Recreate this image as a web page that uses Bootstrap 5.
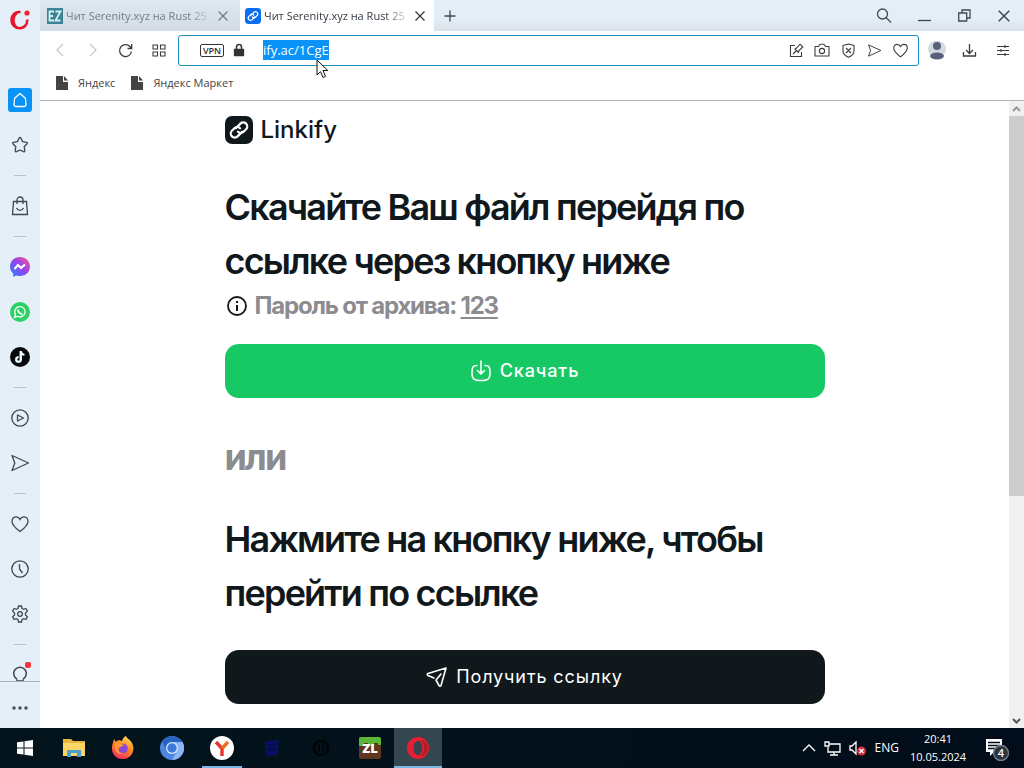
<!DOCTYPE html>
<html lang="ru">
<head>
<meta charset="utf-8">
<meta name="viewport" content="width=device-width, initial-scale=1">
<title>Linkify</title>
<link href="https://cdn.jsdelivr.net/npm/bootstrap@5.3.0/dist/css/bootstrap.min.css" rel="stylesheet">
<style>
body{font-family:"Open Sans","Noto Sans",sans-serif;font-size:12px;line-height:16px;color:#333;background:#fff}
button,input{font:inherit;color:inherit}
button{border:0;background:none;padding:0}
svg{display:block;fill:none;stroke:currentColor;stroke-width:1.3;flex:none}
.ic{width:18px;height:18px}
.side{width:40px;background:#e5eff8;color:#3f474e}
.side-logo{height:77px;padding:9px 0 0 9px}
.side-list{overflow:hidden;min-height:0}
.side-btn{height:45px;width:40px;flex:none;display:flex;align-items:center;justify-content:center}
.side-sep{height:16px;flex:none;display:flex;align-items:center;justify-content:center}
.side-sep::before{content:"";width:12px;height:1px;background:#b9c3cb}
.side-foot{height:47px;padding-top:6px;border-top:1px solid #a9b3bb}
.home-tile{width:24px;height:24px;border-radius:3px;background:#0a93f7;color:#fff;display:grid;place-items:center}
.tabs{height:31px;background:linear-gradient(#e4eef7 60%,#d8e1e9)}
.btab{width:200px;padding:0 11px 0 7px;gap:3px;color:#747d86;background:linear-gradient(#dfe8f0,#d3dce5)}
.btab.current{width:194px;padding:0 8px 0 5px;background:#fff;color:#333b45}
.btab-title{line-height:18px;font-size:11px;white-space:nowrap;flex:1 1 0;min-width:0;text-align:left;-webkit-mask-image:linear-gradient(to right,#000 82%,transparent);mask-image:linear-gradient(to right,#000 82%,transparent)}
.fav{width:16px;height:16px}
.winbtn{width:40px;height:31px;display:grid;place-items:center;color:#404850}
.newtab{width:31px}
.tools{height:38px;padding:0 5px 0 3px;color:#3c3c3c}
.tool{width:33px;height:30px;display:grid;place-items:center}
.dim{color:#c9c9c9}
.addr{height:31px;border:1px solid #1a8fc0;border-radius:3px;padding:0 5px 0 21px;margin:0 1px 0 3px}
.vpn{border:1px solid #333;border-radius:2px;font-size:9px;line-height:11px;width:24px;text-align:center;font-weight:600;color:#333}
.addr-input{width:66px;height:20px;border:0;padding:0;font-size:13px;background:#0a93f7;color:#fff;outline:0;margin-left:17px}
.addr-btn{width:26px;height:26px;display:grid;place-items:center}
.marks{height:32px;border-bottom:1px solid #b4b4b4;padding:0 0 4px 14px;gap:14px}
.marks a{color:#444;text-decoration:none;display:flex;align-items:center;gap:8px;font-size:11px}
.page-view{min-height:0;overflow:hidden}
.sheet{font-family:Inter,sans-serif;color:#11181c;max-width:600px;width:100%}
.brand-row{height:58px;gap:8px;font-size:24px;font-weight:500;line-height:32px}
.big{font-size:36px;line-height:54px;font-weight:600;letter-spacing:-.05em;margin:0}
.first{padding-top:21px}
.second{padding:28px 0 30px}
.pw{font-size:24px;line-height:36px;font-weight:700;letter-spacing:-.05em;color:#8c8c90}
.pw u{text-decoration-thickness:2px;text-underline-offset:3px}
.cta{height:54px;border-radius:14px;font-size:18px;font-weight:500;letter-spacing:.05em;color:#fff;gap:8px}
.cta-green{background:#17c964;margin:20px 0 24px}
.cta-dark{background:#11181c;font-weight:400}
.or{color:#8c8c90;font-weight:700}
.sbar{width:15px;background:#f0f0f0;color:#555}
.sbar-thumb{height:380px;background:#cdcdcd}
.sbar button{height:15px;display:grid;place-items:center}
.taskbar{height:40px;background:linear-gradient(to right,#03141c,#010d1a);color:#fff}
.task{width:49px;height:40px;display:grid;place-items:center;flex:none}
.task.open{box-shadow:inset 0 -2px #7ab8e8;width:40px;margin:0 5px 0 6px}
.task.front{background:#34464f;box-shadow:inset 0 -2px #7ab8e8;width:48px}
.tray{font-size:12px;padding-right:13px}
.clock{width:62px;line-height:18px;text-align:center;font-size:11px}
.pointer-arrow{position:absolute;left:316px;top:59px;z-index:5}
.dot-red{position:absolute;right:9px;top:10px;width:6px;height:6px;border-radius:2px;background:#f0353b}
</style>
</head>
<body>
<svg width="0" height="0" class="position-absolute" aria-hidden="true">
  <symbol id="link" viewBox="0 0 28 28"><g transform="rotate(-45 14 14)" fill="none" stroke="#fff" stroke-width="2.2" stroke-linecap="round"><path d="M15 17.500H8.500a4 4 0 0 1 0-8H12a4 4 0 0 1 4 4"/><path d="M13 10.500h6.500a4 4 0 0 1 0 8H16a4 4 0 0 1-4-4"/></g></symbol>
  <symbol id="heart" viewBox="0 0 20 20"><path d="M10 17.500C5 13.800 2 11 2 7.200 2 4.600 3.900 2.800 6 2.800c1.800 0 3.200 1 4 2.600.8-1.600 2.200-2.600 4-2.600 2.100 0 4 1.800 4 4.400 0 3.800-3 6.600-8 10.300z"/></symbol>
  <symbol id="send" viewBox="0 0 20 20"><path d="M2 2.500 18.500 10 2 17.500 4.800 10z" stroke-linejoin="round"/></symbol>
  <symbol id="cross" viewBox="0 0 12 12"><path d="m1.500 1.500 9 9m0-9-9 9"/></symbol>
  <symbol id="doc" viewBox="0 0 14 16"><path d="M1 1h7v6h5v8H1z" fill="#444" stroke="none"/><path d="M9 1l4 4.500H9z" fill="#444" stroke="none"/></symbol>
</svg>

<div class="d-flex flex-column vh-100 overflow-hidden position-relative">
  <div class="d-flex flex-grow-1 overflow-hidden">
    <aside class="side d-flex flex-column flex-shrink-0">
      <div class="side-logo flex-shrink-0">
        <svg width="22" height="22" viewBox="0 0 22 22"><path d="M11.500 3.200C6 2.200 2.500 6.500 2.500 11c0 4.600 3.600 8.300 8.200 8.300 4.800 0 8-4 7.500-8.800" stroke="#e5172f" stroke-width="2.600"/><path d="M8 4c-2 1.500-3.500 4-3.500 7s1.500 6.500 4 8" stroke="#e5172f" stroke-width="2.500"/><circle cx="18" cy="4" r="2.600" fill="#f0242f" stroke="none"/></svg>
      </div>
      <nav class="side-list d-flex flex-column flex-grow-1">
        <button class="side-btn" aria-label="Home"><span class="home-tile"><svg class="ic" viewBox="0 0 18 18"><path d="M5 15.500h8a2 2 0 0 0 2-2.200l-.6-6L9 2.500 3.600 7.300l-.6 6A2 2 0 0 0 5 15.500z" stroke-linejoin="round"/></svg></span></button>
        <button class="side-btn" aria-label="Pinboards"><svg class="ic" viewBox="0 0 18 18"><path d="M8.200 2q.8-1 1.600 0l1.800 3.600 4 .7q1.200.4.500 1.400l-2.900 3 .6 4.200q-.1 1.200-1.300.8L9 14l-3.500 1.700q-1.200.4-1.300-.8l.6-4.200-2.900-3q-.7-1 .5-1.400l4-.7z" stroke-linejoin="round"/></svg></button>
        <div class="side-sep"></div>
        <button class="side-btn" aria-label="Shopping"><svg width="18" height="20" viewBox="0 0 18 20"><path d="M2.500 5.500h13l1 13h-15zM6 8V4a3 3 0 0 1 6 0v4M5.500 12c1.500 3.200 5.500 3.200 7 0"/></svg></button>
        <div class="side-sep"></div>
        <button class="side-btn" aria-label="Messenger"><svg width="20" height="20" viewBox="0 0 20 20"><defs><linearGradient id="mg" x1="0" y1="1" x2="1" y2="0"><stop stop-color="#2485ff"/><stop offset=".55" stop-color="#9a40ee"/><stop offset="1" stop-color="#ff6080"/></linearGradient></defs><path d="M10 0C4.300 0 0 4.100 0 9.500c0 3 1.200 5.300 3.200 7V20l3-1.600c1.200.4 2.400.6 3.800.6 5.700 0 10-4.100 10-9.500S15.700 0 10 0z" fill="url(#mg)" stroke="none"/><path d="m4.500 12 3.500-4 3 3 4-3.500" stroke="#fff" stroke-width="2.200"/></svg></button>
        <button class="side-btn" aria-label="WhatsApp"><svg width="20" height="20" viewBox="0 0 20 20"><circle cx="10" cy="10" r="10" fill="#2bd162" stroke="none"/><path d="m4.500 15.500.9-3.200a5.200 5.200 0 1 1 2 2z" stroke="#fff"/><path d="M8 7.500c0 2.500 2 4.500 4.300 4.500" stroke="#fff" stroke-width="1.800"/></svg></button>
        <button class="side-btn" aria-label="TikTok"><svg width="20" height="20" viewBox="0 0 20 20"><circle cx="10" cy="10" r="10" fill="#08090c" stroke="none"/><path d="M10.300 4v8.500a2.200 2.200 0 1 1-2.200-2.200" stroke="#25e6e0" stroke-width="2"/><path d="M11 4v8.500a2.300 2.300 0 1 1-2.300-2.300M11 4.500c.3 2 1.500 3.200 3.500 3.400" stroke="#fff" stroke-width="1.800"/></svg></button>
        <div class="side-sep"></div>
        <button class="side-btn" aria-label="Player"><svg class="ic" viewBox="0 0 18 18"><circle cx="9" cy="9" r="8.200"/><path d="M6.500 6v6l6-3z" stroke-linejoin="round"/></svg></button>
        <button class="side-btn" aria-label="My Flow"><svg width="20" height="20"><use href="#send"/></svg></button>
        <div class="side-sep"></div>
        <button class="side-btn" aria-label="Bookmarks"><svg width="20" height="20"><use href="#heart"/></svg></button>
        <button class="side-btn" aria-label="History"><svg class="ic" viewBox="0 0 18 18"><circle cx="9" cy="9" r="8.200"/><path d="M8.500 4v5l3 4"/></svg></button>
        <button class="side-btn" aria-label="Settings"><svg class="ic" viewBox="0 0 18 18"><path d="M7.500 1h3l.5 2.500 1.500.8 2.400-.8 1.500 2.600L14.500 8v2l1.900 1.900-1.500 2.600-2.400-.8-1.500.8-.5 2.500h-3L7 14.500l-1.500-.8-2.400.8-1.500-2.600L3.500 10V8L1.600 6.100l1.500-2.600 2.400.8L7 3.500z" stroke-linejoin="round"/><circle cx="9" cy="9" r="2.300"/></svg></button>
        <div class="side-sep"></div>
        <button class="side-btn position-relative" aria-label="Tips"><svg width="18" height="20" viewBox="0 0 18 20"><path d="M6 14a6.300 6.300 0 1 1 6 0M6 14.500v1.500h6v-1.500" stroke-width="1.500"/></svg><span class="dot-red"></span></button>
      </nav>
      <button class="side-foot flex-shrink-0 d-flex justify-content-center align-items-center" aria-label="More"><svg width="18" height="6" viewBox="0 0 18 6" fill="none"><g fill="#454d54" stroke="none"><circle cx="3" cy="3" r="1.700"/><circle cx="9" cy="3" r="1.700"/><circle cx="15" cy="3" r="1.700"/></g></svg></button>
    </aside>

    <div class="d-flex flex-column flex-grow-1 overflow-hidden">
      <div class="tabs d-flex flex-shrink-0">
        <div class="btab d-flex align-items-center">
          <svg class="fav" viewBox="0 0 16 16"><path d="M0 0h16v16H0z" fill="#3a8493" stroke="none"/><path d="M7 3.500H2.500v9H7M2.500 8H6M8.500 3.500h5l-5 9h5" stroke="#d8eef2" stroke-width="1.800"/></svg>
          <span class="btab-title">Чит Serenity.xyz на Rust 25</span>
          <button aria-label="Закрыть"><svg width="12" height="12"><use href="#cross"/></svg></button>
        </div>
        <div class="btab current d-flex align-items-center">
          <svg class="fav" viewBox="0 0 28 28"><rect width="28" height="28" rx="6" fill="#0870f0" stroke="none"/><use href="#link"/></svg>
          <span class="btab-title">Чит Serenity.xyz на Rust 25</span>
          <button aria-label="Закрыть"><svg width="12" height="12"><use href="#cross"/></svg></button>
        </div>
        <button class="winbtn newtab" aria-label="Новая вкладка"><svg width="12" height="12" viewBox="0 0 12 12"><path d="M6 .5v11M.5 6h11"/></svg></button>
        <button class="winbtn ms-auto" aria-label="Поиск"><svg width="16" height="16" viewBox="0 0 16 16"><circle cx="6.500" cy="6" r="5"/><path d="m10 9.500 5 5"/></svg></button>
        <button class="winbtn" aria-label="Свернуть"><svg width="13" height="13" viewBox="0 0 13 13"><path d="M0 11.500h13"/></svg></button>
        <button class="winbtn" aria-label="Восстановить"><svg width="13" height="13" viewBox="0 0 13 13"><path d="M.7 4h8v8h-8zM4 4V1h8v8H9"/></svg></button>
        <button class="winbtn" aria-label="Закрыть окно"><svg width="14" height="14"><use href="#cross"/></svg></button>
      </div>

      <div class="tools d-flex align-items-center flex-shrink-0">
        <button class="tool dim" aria-label="Назад"><svg width="10" height="14" viewBox="0 0 10 14"><path d="m8 1-6 6 6 6"/></svg></button>
        <button class="tool dim" aria-label="Вперёд"><svg width="10" height="14" viewBox="0 0 10 14"><path d="m2 1 6 6-6 6"/></svg></button>
        <button class="tool" aria-label="Обновить"><svg width="15" height="15" viewBox="0 0 15 15"><path d="M13.500 8.500a6 6 0 1 1-1.500-5l1.500 1.800M13.700 1v4.500H9.500"/></svg></button>
        <button class="tool" aria-label="Экспресс-панель"><svg width="14" height="13" viewBox="0 0 14 13"><path d="M1 1h4.500v4H1zM8.500 1H13v4H8.500zM1 8h4.500v4H1zM8.500 8H13v4H8.500z" stroke-width="1.100"/></svg></button>
        <div class="addr d-flex align-items-center flex-grow-1">
          <span class="vpn">VPN</span>
          <svg class="ms-2" width="14" height="14" viewBox="0 0 14 14"><path d="M2.500 6.500h9v6h-9z" fill="#333" stroke="#333" stroke-linejoin="round"/><path d="M4.500 6V4a2.500 2.500 0 0 1 5 0v2" stroke-width="1.600"/></svg>
          <input class="addr-input" aria-label="Адрес" value="ify.ac/1CgE">
          <div class="d-flex ms-auto">
            <button class="addr-btn" aria-label="Править"><svg width="15" height="15" viewBox="0 0 15 15"><path d="M6 2.500H1.500v11h11V9M4 11l3.500-3.500M6 6l3.500 3.500.5-2L13.800 4 11 1.200 7.500 5z" stroke-width="1.100"/></svg></button>
            <button class="addr-btn" aria-label="Снимок"><svg width="16" height="14" viewBox="0 0 16 14"><path d="M1 3.500h3.500L6 1.200h4l1.500 2.300H15V13H1z" stroke-linejoin="round" stroke-width="1.100"/><circle cx="8" cy="8" r="2.600" stroke-width="1.100"/></svg></button>
            <button class="addr-btn" aria-label="Защита"><svg width="15" height="15" viewBox="0 0 15 15"><path d="M7.500 1 13 2.500V8c0 3-2.500 5-5.500 6.200C4.500 13 2 11 2 8V2.500zM5 5l5 5M10 5l-5 5" stroke-linejoin="round" stroke-width="1.100"/></svg></button>
            <button class="addr-btn" aria-label="Отправить"><svg width="15" height="15"><use href="#send"/></svg></button>
            <button class="addr-btn" aria-label="В закладки"><svg width="17" height="17"><use href="#heart"/></svg></button>
          </div>
        </div>
        <button class="tool" aria-label="Профиль"><svg width="18" height="20" viewBox="0 0 18 20"><rect width="18" height="16" y="1" rx="8" fill="#d3d9e3" stroke="none"/><g fill="#596178" stroke="none"><circle cx="9" cy="6" r="4"/><ellipse cx="9" cy="16" rx="7" ry="3.500"/></g></svg></button>
        <button class="tool" aria-label="Загрузки"><svg width="15" height="15" viewBox="0 0 15 15"><path d="M1.500 9v4h12V9M7.500 1v9M4 7l3.500 3.500L11 7"/></svg></button>
        <button class="tool" aria-label="Настройки"><svg width="14" height="14" viewBox="0 0 14 14"><path d="M1 3.500h12M1 7.500h12M1 11.500h12M9 2v3M5 6v3M9 10v3" stroke-width="1.100"/></svg></button>
      </div>

      <nav class="marks d-flex align-items-center flex-shrink-0">
        <a href="#"><svg width="16" height="16"><use href="#doc"/></svg>Яндекс</a>
        <a href="#"><svg width="16" height="16"><use href="#doc"/></svg>Яндекс Маркет</a>
      </nav>

      <div class="page-view d-flex flex-grow-1">
        <main class="flex-grow-1 d-flex justify-content-center overflow-hidden">
          <div class="sheet">
            <header class="brand-row d-flex align-items-center">
              <svg width="28" height="28" viewBox="0 0 28 28"><rect width="28" height="28" rx="7" fill="#11181c" stroke="none"/><use href="#link"/></svg>
              Linkify
            </header>
            <h1 class="big first">Скачайте Ваш файл перейдя по ссылке через кнопку ниже</h1>
            <div class="pw d-flex align-items-center gap-2">
              <svg width="22" height="22" viewBox="0 0 22 22" color="#11181c"><circle cx="12" cy="11" r="9" stroke-width="1.800"/><path d="M12 10v6M12 6v2" stroke-width="2"/></svg>
              <span>Пароль от архива: <u>123</u></span>
            </div>
            <button class="cta cta-green w-100 d-flex align-items-center justify-content-center">
              <svg width="22" height="22" viewBox="0 0 22 22" stroke-linecap="round" stroke-linejoin="round"><path d="M7 5.500C2.500 5.500 2 7.500 2 13s1.500 7.500 9 7.500 9-2 9-7.500-.5-7.500-5-7.500M11 1v12.500M7.500 10.500 11 14l3.500-3.500" stroke-width="1.600"/></svg>
              Скачать
            </button>
            <div class="big or pt-2">или</div>
            <h2 class="big second">Нажмите на кнопку ниже, чтобы перейти по ссылке</h2>
            <button class="cta cta-dark w-100 d-flex align-items-center justify-content-center">
              <svg width="22" height="22" viewBox="0 0 22 22" stroke-linecap="round" stroke-linejoin="round"><path d="M20 2 2 7.500c-1 .4-1 1.500 0 2L8 12M20 2l-5 17.500c-.4 1-1.500 1-2 0L10 14l5-6" stroke-width="1.600"/></svg>
              Получить ссылку
            </button>
          </div>
        </main>
        <div class="sbar d-flex flex-column flex-shrink-0">
          <button aria-label="Вверх"><svg width="9" height="6" viewBox="0 0 9 6"><path d="m1 5 3.500-3.500L8 5" stroke="#999" stroke-width="2"/></svg></button>
          <div class="sbar-thumb"></div>
          <button class="mt-auto" aria-label="Вниз"><svg width="9" height="6" viewBox="0 0 9 6"><path d="m1 1 3.500 3.500L8 1" stroke-width="2"/></svg></button>
        </div>
      </div>
    </div>
  </div>

  <footer class="taskbar d-flex align-items-center flex-shrink-0">
    <button class="task" aria-label="Пуск"><svg width="16" height="16" viewBox="0 0 16 16"><path d="m0 2.300 6.500-.9v6.100H0zM7.500 1.200 16 0v7.500H7.500zM0 8.500h6.500v6.100L0 13.700zM7.500 8.500H16V16l-8.500-1.200z" fill="#fff" stroke="none"/></svg></button>
    <button class="task" aria-label="Проводник"><svg width="22" height="20" viewBox="0 0 22 20"><g stroke="none"><path d="M0 1h8l2 2h12v15H0z" fill="#e8b43c"/><path d="M0 5h22v13H0z" fill="#fbd566"/><path d="M4 12h14v7h-4v-4H8v4H4z" fill="#4b9fcd"/></g></svg></button>
    <button class="task" aria-label="Firefox"><svg width="24" height="24" viewBox="0 0 24 24"><defs><linearGradient id="ff" x1=".8" y1="0" x2=".3" y2="1"><stop stop-color="#ffe34a"/><stop offset=".5" stop-color="#ff8126"/><stop offset="1" stop-color="#f52a68"/></linearGradient></defs><g stroke="none"><path d="M15 0c1 3 4 3 6 7 4 8-1 16-9.500 16S-.5 15 1.500 8L3 3l2 3c1-2 4-2 6-1 1-3 2-4 4-5z" fill="url(#ff)"/><circle cx="12" cy="12.500" r="4.800" fill="#8c46d8"/><path d="M4 7c4-1 5 1 9 2-1 2-4 1-5 3-2 3 2 6 5 5-5 4-11-2-9-10z" fill="#ff9630"/></g></svg></button>
    <button class="task" aria-label="Chromium"><svg width="24" height="24" viewBox="0 0 24 24"><g stroke="none"><circle cx="12" cy="12" r="12" fill="#4b87e0"/><path d="M12 6h10.500A12 12 0 0 1 12 24l5-9z" fill="#8ab6f8"/><path d="M2 5.500A12 12 0 0 1 22.400 6H12L7 15z" fill="#2a63bd"/><circle cx="12" cy="12" r="6" fill="#d7e7ff"/><circle cx="12" cy="12" r="4.700" fill="#3c7ae0"/></g></svg></button>
    <button class="task open" aria-label="Яндекс Браузер"><svg width="24" height="24" viewBox="0 0 24 24"><circle cx="12" cy="12" r="12" fill="#fff" stroke="none"/><path d="m6 6 6 6.500V20" stroke="#e8352e" stroke-width="3.400"/><path d="m18 6-6 6.500" stroke="#f06a25" stroke-width="3.400"/></svg></button>
    <button class="task" aria-label="Приложение"><svg width="20" height="20" viewBox="0 0 20 20"><path d="M3 3l14-1-1 15-12 1z" fill="#07105e" stroke="none"/><path d="M6 7h8M6 12h7" stroke="#050b45" stroke-width="2"/></svg></button>
    <button class="task" aria-label="Приложение"><svg width="20" height="20" viewBox="0 0 20 20" color="#010608"><circle cx="10" cy="10" r="7" stroke-width="3"/><path d="M8 6v8M12 6v8" stroke-width="2"/></svg></button>
    <button class="task" aria-label="ZL"><svg width="22" height="22" viewBox="0 0 22 22"><g stroke="none"><rect width="22" height="22" rx="2" fill="#61361f"/><path d="M0 2q0-2 2-2h18q2 0 2 2v6h-3V6h-4v3H9V6H5v3H0z" fill="#59b637"/><text x="11" y="16" text-anchor="middle" fill="#fff" font-family="Open Sans,sans-serif" font-weight="800" font-size="13">ZL</text></g></svg></button>
    <button class="task front" aria-label="Opera"><svg width="24" height="24" viewBox="0 0 24 24"><g stroke="none"><path fill-rule="evenodd" d="M12 1a11 11 0 1 0 0 22 11 11 0 0 0 0-22zm0 4c3 0 4.300 3.300 4.300 7S15 19 12 19s-4.300-3.300-4.300-7S9 5 12 5z" fill="#e81f31"/><path d="M13 4.500c4 0 5 4 5 7.500s-1 7.500-5 7.500c3 2 9-1 9-7.500S16 2.500 13 4.500z" fill="#b51928"/></g></svg></button>
    <div class="tray ms-auto d-flex align-items-center">
      <svg class="me-2" width="14" height="8" viewBox="0 0 14 8"><path d="m1 7 6-6 6 6"/></svg>
      <svg class="me-2" width="17" height="15" viewBox="0 0 17 15"><path d="M5 3h11v8H4V6M1 1h4v4H1zM10 11v3M6 14h8"/></svg>
      <svg class="me-2" width="18" height="15" viewBox="0 0 18 15"><path d="M1 5h2l4-4v12L3 9H1z"/><circle cx="12.500" cy="10" r="4.500" fill="#d8303f" stroke="none"/><path d="m10.500 8 4 4m0-4-4 4"/></svg>
      <span class="me-2">ENG</span>
      <div class="clock me-3">20:41<br>10.05.2024</div>
      <svg width="26" height="26" viewBox="0 0 26 26"><path d="M1 4h16v13H9l-4 4v-4H1z" fill="#fff" stroke="none"/><path d="M3 7.500h12M3 10.500h12M3 13.500h8" stroke="#010d1a"/><circle cx="16" cy="18" r="7.500" fill="#2a3540" stroke="#79828a"/><text x="16" y="22" text-anchor="middle" fill="#fff" stroke="none" font-size="11" font-weight="600" font-family="Open Sans,sans-serif">4</text></svg>
    </div>
  </footer>

  <svg class="pointer-arrow" width="13" height="20" viewBox="0 0 13 20"><path d="M1 1v15l3.500-3.300L7 18.500l2.500-1.200L7 11.500h4.800z" fill="#fff" stroke="#111" stroke-width="1"/></svg>
</div>
<script src="https://cdn.jsdelivr.net/npm/bootstrap@5.3.0/dist/js/bootstrap.bundle.min.js"></script>
</body>
</html>
